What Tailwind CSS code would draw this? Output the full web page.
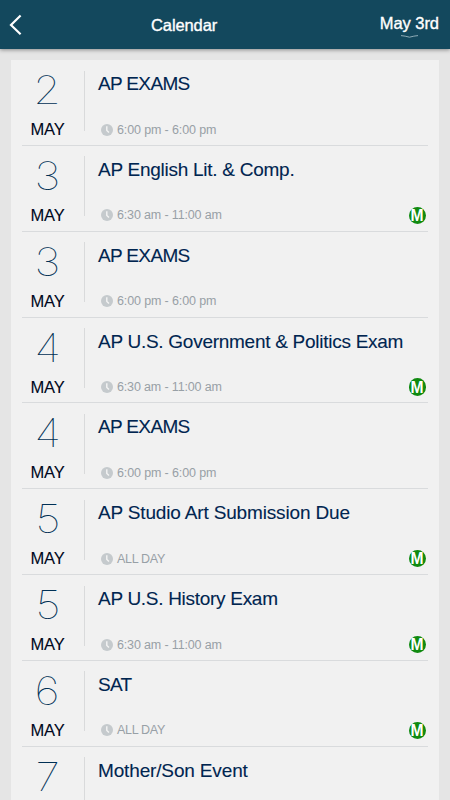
<!DOCTYPE html>
<html lang="en">
<head>
<meta charset="utf-8">
<title>Calendar</title>
<script src="https://cdn.jsdelivr.net/npm/@tailwindcss/browser@4"></script>
</head>
<body class="h-[800px] w-[450px] overflow-hidden bg-[#e5e5e5] font-['Liberation_Sans',Arial,sans-serif]">
<svg class="hidden">
  <symbol id="clock" viewBox="0 0 12 12"><circle cx="6" cy="6" r="6" fill="#c5cacd"/><path d="M5.8 2.3V6.4L8 8.6" fill="none" stroke="#f4f4f4" stroke-width="1.4"/></symbol>
</svg>
<header class="relative flex h-[49px] items-start bg-[#13485d] px-[9px] text-white shadow-[0_1px_4px_rgba(0,0,0,0.4)]">
  <svg class="mt-[14px] h-[22px] w-[13px]" viewBox="0 0 13 22" fill="none" stroke="#fff" stroke-width="2.2"><path d="M11.6 1.5L2 11L11.6 20.3"/></svg>
  <h1 class="mt-[14px] ml-[129px] text-[16.5px] leading-[22px] tracking-[-0.1px] [-webkit-text-stroke:0.35px_white]">Calendar</h1>
  <div class="mt-[12px] mr-[2px] ml-auto flex flex-col items-end">
    <span class="text-[16.5px] leading-[22px] tracking-[-0.05px] whitespace-nowrap [-webkit-text-stroke:0.35px_white]">May 3rd</span>
    <svg class="mr-[20px] h-[4px] w-[19px]" viewBox="0 0 19 4" fill="none" stroke="#8eabb6" stroke-width="1"><path d="M1 1.6Q5 1.9 9.5 3.2Q14 1.9 18 1.6"/></svg>
  </div>
</header>
<main id="list" class="mx-[11px] mt-[11px] h-[740px] overflow-hidden bg-[#f1f1f1] px-[11px]"></main>
<template id="row">
  <article class="flex h-[85.85px] border-b border-[#d9dbdd]">
    <div class="flex w-[51px] flex-col items-center">
      <span data-day class="mt-[10px] h-[40px] origin-center scale-x-[1.14] font-['Inter',sans-serif] text-[39px] leading-[40px] font-thin text-[#003055]"></span>
      <span data-month class="mt-[9px] text-[16.5px] leading-[20px] tracking-[-0.1px] text-[#00081c] [-webkit-text-stroke:0.1px_#00081c]">MAY</span>
    </div>
    <div class="mt-[10.5px] ml-[11px] h-[60px] w-px bg-[#d9dadb]"></div>
    <div class="ml-[13px] flex flex-1 flex-col">
      <h2 data-title class="mt-[12px] text-[19px] leading-[24px] whitespace-nowrap text-[#002550] [-webkit-text-stroke:0.1px_#002550]"></h2>
      <div class="mt-[22.5px] ml-[3px] flex h-[22px] items-center">
        <svg class="h-[12px] w-[12px]"><use href="#clock"/></svg>
        <span data-time class="ml-[4px] text-[12.5px] leading-[16px] text-[#98a0a6]"></span>
        <span data-badge class="mr-[2px] ml-auto flex h-[17.5px] w-[17.5px] items-center justify-center rounded-full bg-[#108a10] text-[17px] leading-[18px] font-bold text-white"><span class="mt-[1.5px] scale-x-[0.92]">M</span></span>
      </div>
    </div>
  </article>
</template>
<script>
const range6 = ["6:00 pm - 6:00 pm", "tracking-[-0.13px]"];
const range11 = ["6:30 am - 11:00 am", "tracking-[-0.15px]"];
const allDay = ["ALL DAY", "tracking-[-0.3px]"];
const events = [
  [2, "AP EXAMS", "tracking-[-0.65px]", range6, false],
  [3, "AP English Lit. & Comp.", "tracking-[-0.26px]", range11, true],
  [3, "AP EXAMS", "tracking-[-0.65px]", range6, false],
  [4, "AP U.S. Government & Politics Exam", "tracking-[-0.27px]", range11, true],
  [4, "AP EXAMS", "tracking-[-0.65px]", range6, false],
  [5, "AP Studio Art Submission Due", "tracking-[-0.16px]", allDay, true],
  [5, "AP U.S. History Exam", "tracking-[-0.29px]", range11, true],
  [6, "SAT", "tracking-[-0.7px]", allDay, true],
  [7, "Mother/Son Event", "tracking-[-0.15px]", null, false]
];
const list = document.getElementById("list"), tpl = document.getElementById("row");
for (const [day, title, tracking, time, badge] of events) {
  const r = tpl.content.cloneNode(true);
  const h = r.querySelector("[data-title]"), t = r.querySelector("[data-time]");
  r.querySelector("[data-day]").textContent = day;
  h.textContent = title;
  h.classList.add(tracking);
  if (time) {
    t.textContent = time[0];
    t.classList.add(time[1]);
  } else {
    t.parentElement.remove();
    r.querySelector("[data-month]").remove();
  }
  if (!badge) r.querySelector("[data-badge]")?.remove();
  list.append(r);
}
</script>
</body>
</html>
